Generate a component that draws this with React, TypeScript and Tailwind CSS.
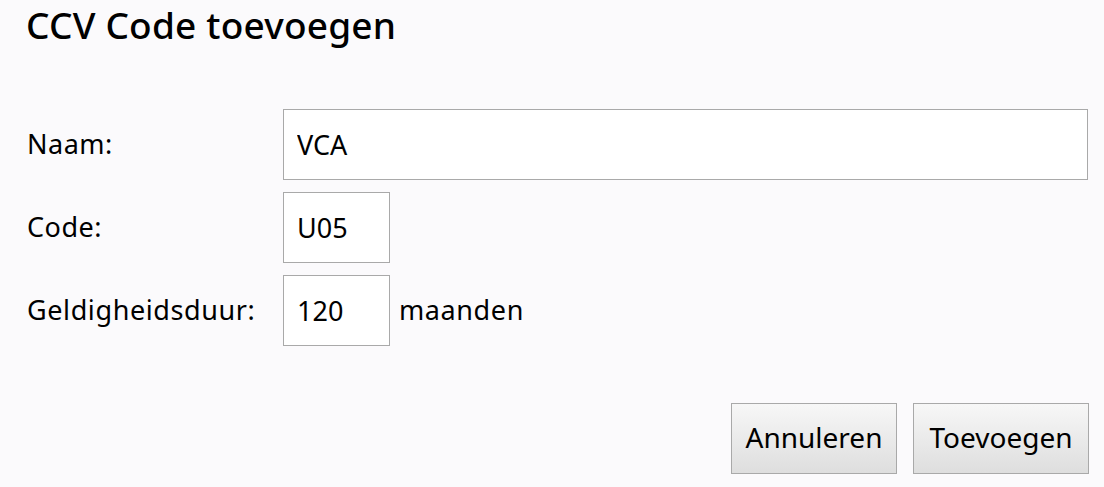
export default function App() {
    return (
        <div className="w-[1104px] h-[487px] bg-[#fbfafc] text-black overflow-hidden" style={{ fontFamily: '"Noto Sans", sans-serif' }}>
            {/* titel */}
            <h1 className="pl-[26px] pt-[1px] text-[37px] font-medium leading-[48px] tracking-[0.2px]">CCV Code toevoegen</h1>

            {/* formulier */}
            <div className="mt-[60px] pl-[27px] pr-[16px] flex flex-col gap-[12px]">
                <div className="flex items-center">
                    <label className="w-[256px] text-[27px] pb-[1px] tracking-[0.5px]">Naam:</label>
                    <input readOnly value="VCA" className="flex-1 h-[71px] border border-[#a9a9a9] bg-white px-[13px] text-[27px] outline-none" />
                </div>
                <div className="flex items-center">
                    <label className="w-[256px] text-[27px] pb-[1px] tracking-[0.5px]">Code:</label>
                    <input readOnly value="U05" className="w-[107px] h-[71px] border border-[#a9a9a9] bg-white px-[13px] text-[27px] outline-none" />
                </div>
                <div className="flex items-center">
                    <label className="w-[256px] text-[27px] pb-[1px] tracking-[0.6px]">Geldigheidsduur:</label>
                    <input readOnly value="120" className="w-[107px] h-[71px] border border-[#a9a9a9] bg-white px-[13px] text-[27px] outline-none" />
                    <span className="ml-[9px] text-[27px] pb-[1px] tracking-[0.6px]">maanden</span>
                </div>
            </div>

            {/* knoppen */}
            <div className="mt-[57px] pr-[15px] flex justify-end gap-[16px]">
                <button className="w-[166px] h-[71px] pb-[3px] border border-[#a9a9a9] bg-gradient-to-b from-[#f7f7f7] to-[#dedede] text-[28px]">Annuleren</button>
                <button className="w-[176px] h-[71px] pb-[3px] border border-[#a9a9a9] bg-gradient-to-b from-[#f7f7f7] to-[#dedede] text-[28px]">Toevoegen</button>
            </div>
        </div>
    );
}
